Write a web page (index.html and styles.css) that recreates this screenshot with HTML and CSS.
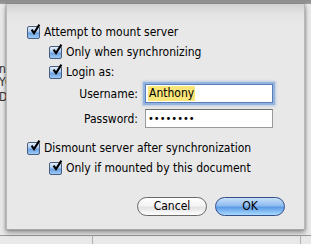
FILE: index.html
```html
<!DOCTYPE html>
<html>
<head>
<meta charset="utf-8">
<link rel="stylesheet" href="styles.css">
</head>
<body>
<div class="window">
  <div class="titlebar"></div>
  <div class="behind">
    <span class="frag f1">n'</span>
    <span class="frag f2">YC</span>
    <span class="frag f3">D</span>
    <span class="ghost-btn">Choose…</span>
    <div class="hline"></div>
    <div class="vline v1"></div>
    <div class="vline v2"></div>
  </div>
  <div class="sheet">
    <div class="row lvl0">
      <span class="cb"><svg viewBox="0 0 12 12"><path d="M2.6 5.6 L5 9 L10.4 0.6" fill="none" stroke="#000" stroke-width="2.1"/></svg></span>
      <span>Attempt to mount server</span>
    </div>
    <div class="row lvl1">
      <span class="cb"><svg viewBox="0 0 12 12"><path d="M2.6 5.6 L5 9 L10.4 0.6" fill="none" stroke="#000" stroke-width="2.1"/></svg></span>
      <span>Only when synchronizing</span>
    </div>
    <div class="row lvl1">
      <span class="cb"><svg viewBox="0 0 12 12"><path d="M2.6 5.6 L5 9 L10.4 0.6" fill="none" stroke="#000" stroke-width="2.1"/></svg></span>
      <span>Login as:</span>
    </div>
    <div class="fields">
      <div class="field-row">
        <span class="label">Username:</span>
        <span class="input focus"><span class="sel">Anthony</span></span>
      </div>
      <div class="field-row">
        <span class="label">Password:</span>
        <span class="input"><span class="dots">••••••••</span></span>
      </div>
    </div>
    <div class="row lvl0 gap">
      <span class="cb"><svg viewBox="0 0 12 12"><path d="M2.6 5.6 L5 9 L10.4 0.6" fill="none" stroke="#000" stroke-width="2.1"/></svg></span>
      <span>Dismount server after synchronization</span>
    </div>
    <div class="row lvl1">
      <span class="cb"><svg viewBox="0 0 12 12"><path d="M2.6 5.6 L5 9 L10.4 0.6" fill="none" stroke="#000" stroke-width="2.1"/></svg></span>
      <span>Only if mounted by this document</span>
    </div>
    <div class="buttons">
      <span class="btn cancel">Cancel</span>
      <span class="btn ok">OK</span>
    </div>
  </div>
</div>
</body>
</html>
```
FILE: styles.css
```css
html, body {
  margin: 0;
  padding: 0;
}
body {
  width: 311px;
  height: 244px;
  overflow: hidden;
  background: #e9e9e9;
  font-family: "DejaVu Sans Condensed", "DejaVu Sans", sans-serif;
  font-stretch: condensed;
  font-size: 12px;
  color: #000;
}
.window {
  position: relative;
  width: 311px;
  height: 244px;
}
.titlebar {
  height: 4px;
  background: linear-gradient(#8c8c8c, #9c9c9c);
}
.behind {
  position: relative;
  height: 240px;
}
.frag {
  position: absolute;
  left: -1px;
  font-size: 12px;
  color: #333;
}
.f1 { top: 58px; }
.f2 { top: 71px; }
.f3 { top: 86px; }
.ghost-btn {
  position: absolute;
  left: 12px;
  top: 198px;
  width: 66px;
  height: 16px;
  border-radius: 9px;
  border: 1px solid #e2e2e2;
  color: #dedede;
  font-size: 11px;
  text-align: center;
  line-height: 16px;
}
.hline {
  position: absolute;
  left: 0;
  right: 0;
  top: 231px;
  height: 1px;
  background: #9a9a9a;
}
.vline {
  position: absolute;
  top: 231px;
  bottom: 0;
  width: 1px;
  background: #b0b0b0;
}
.v1 { left: 92px; }
.v2 { left: 300px; }
.sheet {
  position: absolute;
  left: 6px;
  top: 4px;
  width: 299px;
  height: 226px;
  box-sizing: border-box;
  background: linear-gradient(#d2d2d2 0px, #e4e4e4 10px, #e8e8e8 20px, #e8e8e8);
  border-left: 1px solid #b8b8b8;
  border-right: 1px solid #b8b8b8;
  border-bottom: 1px solid #a8a8a8;
  box-shadow: 0 3px 5px rgba(0,0,0,0.35), -1px 0 2px rgba(0,0,0,0.15), 1px 0 2px rgba(0,0,0,0.15);
  padding: 18px 0 0 20px;
  display: flex;
  flex-direction: column;
}
.row {
  display: flex;
  align-items: center;
  height: 20px;
  gap: 4px;
  white-space: nowrap;
}
.lvl0 { padding-left: 0; }
.lvl1 { padding-left: 22px; }
.gap { margin-top: 7px; }
.cb {
  width: 11px;
  height: 11px;
  border: 1px solid #4a5f80;
  border-radius: 2px;
  background: linear-gradient(#e6f0fb 0%, #a9c8ef 45%, #6c9fe0 55%, #9ccbf6 100%);
  position: relative;
  flex: none;
}
.cb svg {
  position: absolute;
  left: 1px;
  top: -3px;
  width: 12px;
  height: 12px;
}
.fields {
  display: flex;
  flex-direction: column;
  margin-top: -1px;
}
.field-row {
  display: flex;
  align-items: center;
  height: 25px;
  white-space: nowrap;
}
.label {
  width: 118px;
  text-align: right;
  padding-right: 7px;
  box-sizing: border-box;
}
.input {
  display: flex;
  align-items: center;
  width: 128px;
  height: 19px;
  box-sizing: border-box;
  background: #fff;
  border: 1px solid #9a9a9a;
  border-top-color: #6f6f6f;
  padding-left: 2px;
}
.input.focus {
  border-color: #5b7fb5;
  box-shadow: 0 0 0 2px #93b4e0, 0 0 2px 3px rgba(120,160,215,0.4);
}
.sel {
  background: #fbe779;
  padding: 0 1px;
  line-height: 15px;
}
.dots {
  font-size: 11px;
}
.buttons {
  display: flex;
  justify-content: flex-end;
  gap: 8px;
  margin-top: 19px;
  padding-right: 19px;
}
.btn {
  width: 70px;
  height: 19px;
  box-sizing: border-box;
  border-radius: 10px;
  text-align: center;
  line-height: 17px;
  font-size: 12px;
}
.cancel {
  border: 1px solid #6a6a6a;
  background: linear-gradient(#ffffff 0%, #f4f4f4 45%, #e2e2e2 55%, #ffffff 100%);
}
.ok {
  border: 1px solid #33508a;
  background: linear-gradient(#c8e0fa 0%, #8fbcf0 45%, #5d9be6 55%, #a8dafd 100%);
}
```
